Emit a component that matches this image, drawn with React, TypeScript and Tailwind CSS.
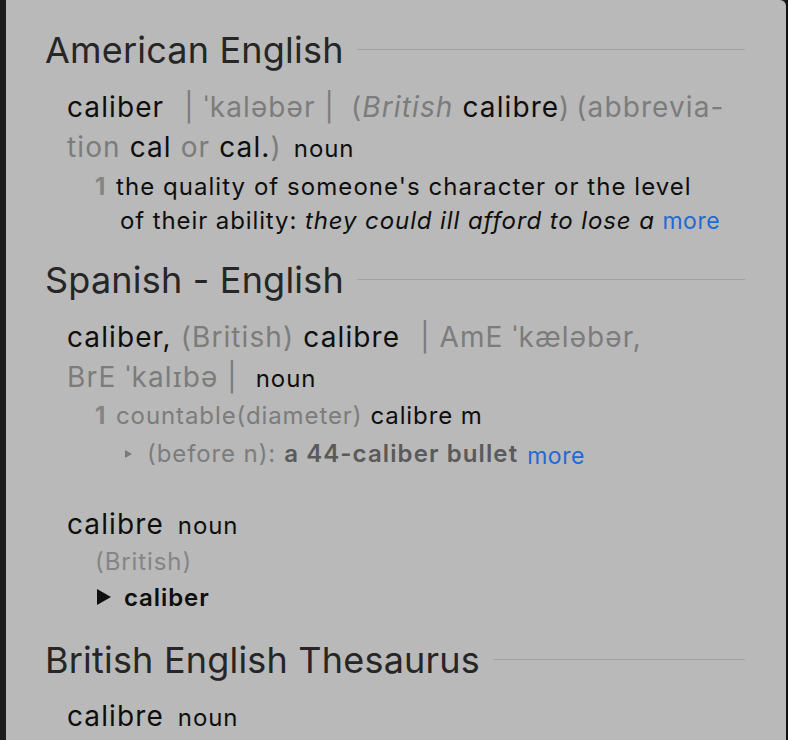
import React from "react";

const font = { fontFamily: "Inter, 'Noto Sans', sans-serif" };

function Heading({ children, top }: { children: React.ReactNode; top: string }) {
  return (
    <div className={`flex items-center ${top} h-[44px] pl-[39px] pr-[41px]`}>
      <span className="whitespace-nowrap text-[36px] leading-[44px] tracking-[0.2px] text-[#262626]">{children}</span>
      <div className="ml-[13px] mt-[-2px] h-px flex-1 bg-[#a2a2a2]" />
    </div>
  );
}

const entry = "h-[40px] whitespace-nowrap text-[28px] leading-[40px] tracking-[1.1px] text-[#0e0e0e]";
const gray = "text-[#7c7c7c]";

export default function App() {
  return (
    <div className="flex h-[740px] w-[788px] overflow-hidden bg-[#1c1c1c]" style={font}>
      <div className="ml-[6px] h-full w-[780px] rounded-tr-[6px] bg-[#b9b9b9] pt-[28px]">
        <Heading top="">American English</Heading>

        <div className="mt-[15px] pl-[61px]">
          <div className={entry}>
            caliber
            <span className={`ml-[20px] ${gray}`}>| ˈkaləbər |</span>
            <span className={`ml-[16px] ${gray}`}>
              (<i>British</i> <span className="text-[#0e0e0e]">calibre</span>)
            </span>
            <span className={`ml-[6px] ${gray}`}>(abbrevia-</span>
          </div>
          <div className={entry}>
            <span className={gray}>tion</span> cal <span className={gray}>or</span> cal.
            <span className={gray}>)</span>
            <span className="ml-[12px] text-[24px] tracking-[0.9px]">noun</span>
          </div>
        </div>

        <div className="mt-[3px] flex pl-[89px] text-[24px] leading-[34px] tracking-[1.05px] text-[#0e0e0e]">
          <span className="w-[21px] font-bold text-[#858585]">1</span>
          <div className="whitespace-nowrap">
            <div className="h-[34px]">the quality of someone's character or the level</div>
            <div className="h-[34px] pl-[4px] tracking-[0.9px]">
              of their ability: <i>they could ill afford to lose a</i>{" "}
              <span className="text-[23px] tracking-[0.5px] text-[#1f6ad4]">more</span>
            </div>
          </div>
        </div>

        <Heading top="mt-[20px]">Spanish - English</Heading>

        <div className="mt-[15px] pl-[61px]">
          <div className={entry}>
            caliber, <span className={gray}>(British)</span> calibre
            <span className={`ml-[20px] ${gray}`}>| AmE ˈkæləbər,</span>
          </div>
          <div className={entry}>
            <span className={gray}>BrE ˈkalɪbə |</span>
            <span className="ml-[18px] text-[24px] tracking-[0.9px]">noun</span>
          </div>
        </div>

        <div className="mt-[1px] pl-[89px] text-[24px] leading-[36px] tracking-[0.9px]">
          <div className="flex h-[36px] whitespace-nowrap">
            <span className="w-[21px] font-bold text-[#858585]">1</span>
            <span className={gray}>countable(diameter)</span>
            <span className="ml-[8px] text-[#0e0e0e]">calibre m</span>
          </div>
          <div className="flex h-[37px] items-center whitespace-nowrap pl-[29px] pt-[2px]">
            <svg width="9" height="10" viewBox="0 0 9 10" className="mr-[14px]">
              <path d="M1 1 L8 5 L1 9 Z" fill="#7a7a7a" />
            </svg>
            <span className={gray}>(before n):</span>
            <span className="ml-[8px] font-semibold tracking-[1.1px] text-[#5a5a5a]">a 44-caliber bullet</span>
            <span className="ml-[9px] mt-[4px] text-[23px] tracking-[0.5px] text-[#1f6ad4]">more</span>
          </div>
        </div>

        <div className="mt-[33px] pl-[61px]">
          <div className={entry}>
            calibre<span className="ml-[14px] text-[24px] tracking-[0.9px]">noun</span>
          </div>
        </div>
        <div className="pl-[89px] text-[24px] leading-[36px] tracking-[0.9px]">
          <div className="h-[36px] text-[#858585]">(British)</div>
          <div className="flex h-[36px] items-center text-[#0e0e0e]">
            <svg width="16" height="18" viewBox="0 0 16 18" className="ml-[1px] mr-[12px] mt-[-2px]">
              <path d="M1 1 L15 9 L1 17 Z" fill="#0e0e0e" />
            </svg>
            <span className="font-semibold">caliber</span>
          </div>
        </div>

        <Heading top="mt-[22px]">British English Thesaurus</Heading>

        <div className="mt-[14px] pl-[61px]">
          <div className={entry}>
            calibre<span className="ml-[14px] text-[24px] tracking-[0.9px]">noun</span>
          </div>
        </div>
      </div>
      <div className="h-full w-[2px] bg-[#111]" />
    </div>
  );
}
